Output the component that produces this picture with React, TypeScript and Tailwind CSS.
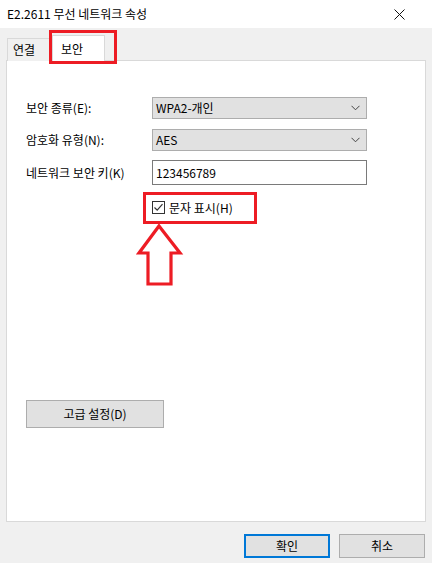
const font = { fontFamily: '"Noto Sans CJK KR", "Noto Sans", sans-serif' };

function Chevron() {
  return (
    <svg width="9" height="6" viewBox="0 0 9 6" className="text-[#444]">
      <path d="M0.5 0.8 L4.5 4.8 L8.5 0.8" fill="none" stroke="currentColor" strokeWidth="1" />
    </svg>
  );
}

function Select({ value }: { value: string }) {
  return (
    <div className="flex h-[22px] w-[215px] items-center justify-between border border-[#adadad] bg-[#e1e1e1] pl-[3px] pr-[6px] text-[12px] leading-none text-black">
      <span>{value}</span>
      <Chevron />
    </div>
  );
}

function Row({ label, children, className }: { label: string; children: React.ReactNode; className?: string }) {
  return (
    <div className={`flex items-center ${className ?? ""}`}>
      <div className="w-[126px] text-[12px] leading-none text-black">{label}</div>
      {children}
    </div>
  );
}

export default function App() {
  return (
    <div className="relative h-[563px] w-[432px] overflow-hidden bg-[#f0f0f0]" style={font}>
      {/* title bar */}
      <div className="flex h-[28px] items-center justify-between bg-white pl-[7px] pr-[27px]">
        <span className="text-[12px] leading-none text-black">E2.2611 무선 네트워크 속성</span>
        <svg width="11" height="11" viewBox="0 0 11 11">
          <path d="M0.5 0.5 L10.5 10.5 M10.5 0.5 L0.5 10.5" stroke="#111" strokeWidth="1" />
        </svg>
      </div>

      {/* tabs */}
      <div className="relative z-10 flex h-[32px] items-end pl-[7px]">
        <div className="mb-[-1px] flex h-[23px] w-[46px] items-center border border-b-0 border-[#d9d9d9] bg-[#f0f0f0] pl-[5px] text-[12px] leading-none text-black">
          연결
        </div>
        <div className="mb-[-1px] ml-[-1px] flex h-[26px] w-[53px] items-center border border-b-0 border-[#d9d9d9] bg-white pl-[8px] text-[12px] leading-none text-black">
          보안
        </div>
      </div>

      {/* panel */}
      <div className="mx-[6px] h-[462px] border border-[#d9d9d9] bg-white pl-[19px] pt-[36px]">
        <Row label="보안 종류(E):">
          <Select value="WPA2-개인" />
        </Row>
        <Row label="암호화 유형(N):" className="mt-[10px]">
          <Select value="AES" />
        </Row>
        <Row label="네트워크 보안 키(K)" className="mt-[9px]">
          <div className="flex h-[25px] w-[215px] items-center border border-[#7a7a7a] bg-white pl-[3px] text-[12px] leading-none text-black">
            123456789
          </div>
        </Row>
        <div className="mt-[16px] flex items-center pl-[126px]">
          <div className="flex h-[13px] w-[13px] items-center justify-center border border-[#333] bg-white">
            <svg width="11" height="11" viewBox="0 0 11 11">
              <path d="M1.5 5.5 L4.2 8.2 L9.5 2.2" fill="none" stroke="#333" strokeWidth="1.2" />
            </svg>
          </div>
          <span className="ml-[4px] text-[12px] leading-none text-black">문자 표시(H)</span>
        </div>
        <div className="mt-[186px] flex h-[28px] w-[138px] items-center justify-center border border-[#adadad] bg-[#e1e1e1] text-[12px] leading-none text-black">
          고급 설정(D)
        </div>
      </div>

      {/* dialog buttons */}
      <div className="mt-[12px] flex justify-end gap-[9px] pr-[7px]">
        <div className="flex h-[24px] w-[86px] items-center justify-center border-2 border-[#0078d7] bg-[#e1e1e1] text-[12px] leading-none text-black">
          확인
        </div>
        <div className="flex h-[24px] w-[86px] items-center justify-center border border-[#adadad] bg-[#e1e1e1] text-[12px] leading-none text-black">
          취소
        </div>
      </div>

      {/* red annotations */}
      <div className="pointer-events-none absolute left-[49px] top-[30px] z-20 h-[34px] w-[68px] border-[3px] border-[#ed1c24]" />
      <div className="pointer-events-none absolute left-[143px] top-[192px] z-20 h-[32px] w-[114px] border-[3px] border-[#ed1c24]" />
      <svg className="pointer-events-none absolute left-[135px] top-[222px] z-20" width="50" height="66" viewBox="0 0 50 66">
        <path
          d="M24 4 L45 31 L36 31 L36 62 L13 62 L13 31 L4 31 Z"
          fill="none"
          stroke="#ed1c24"
          strokeWidth="3.2"
          strokeLinejoin="miter"
        />
      </svg>
    </div>
  );
}
